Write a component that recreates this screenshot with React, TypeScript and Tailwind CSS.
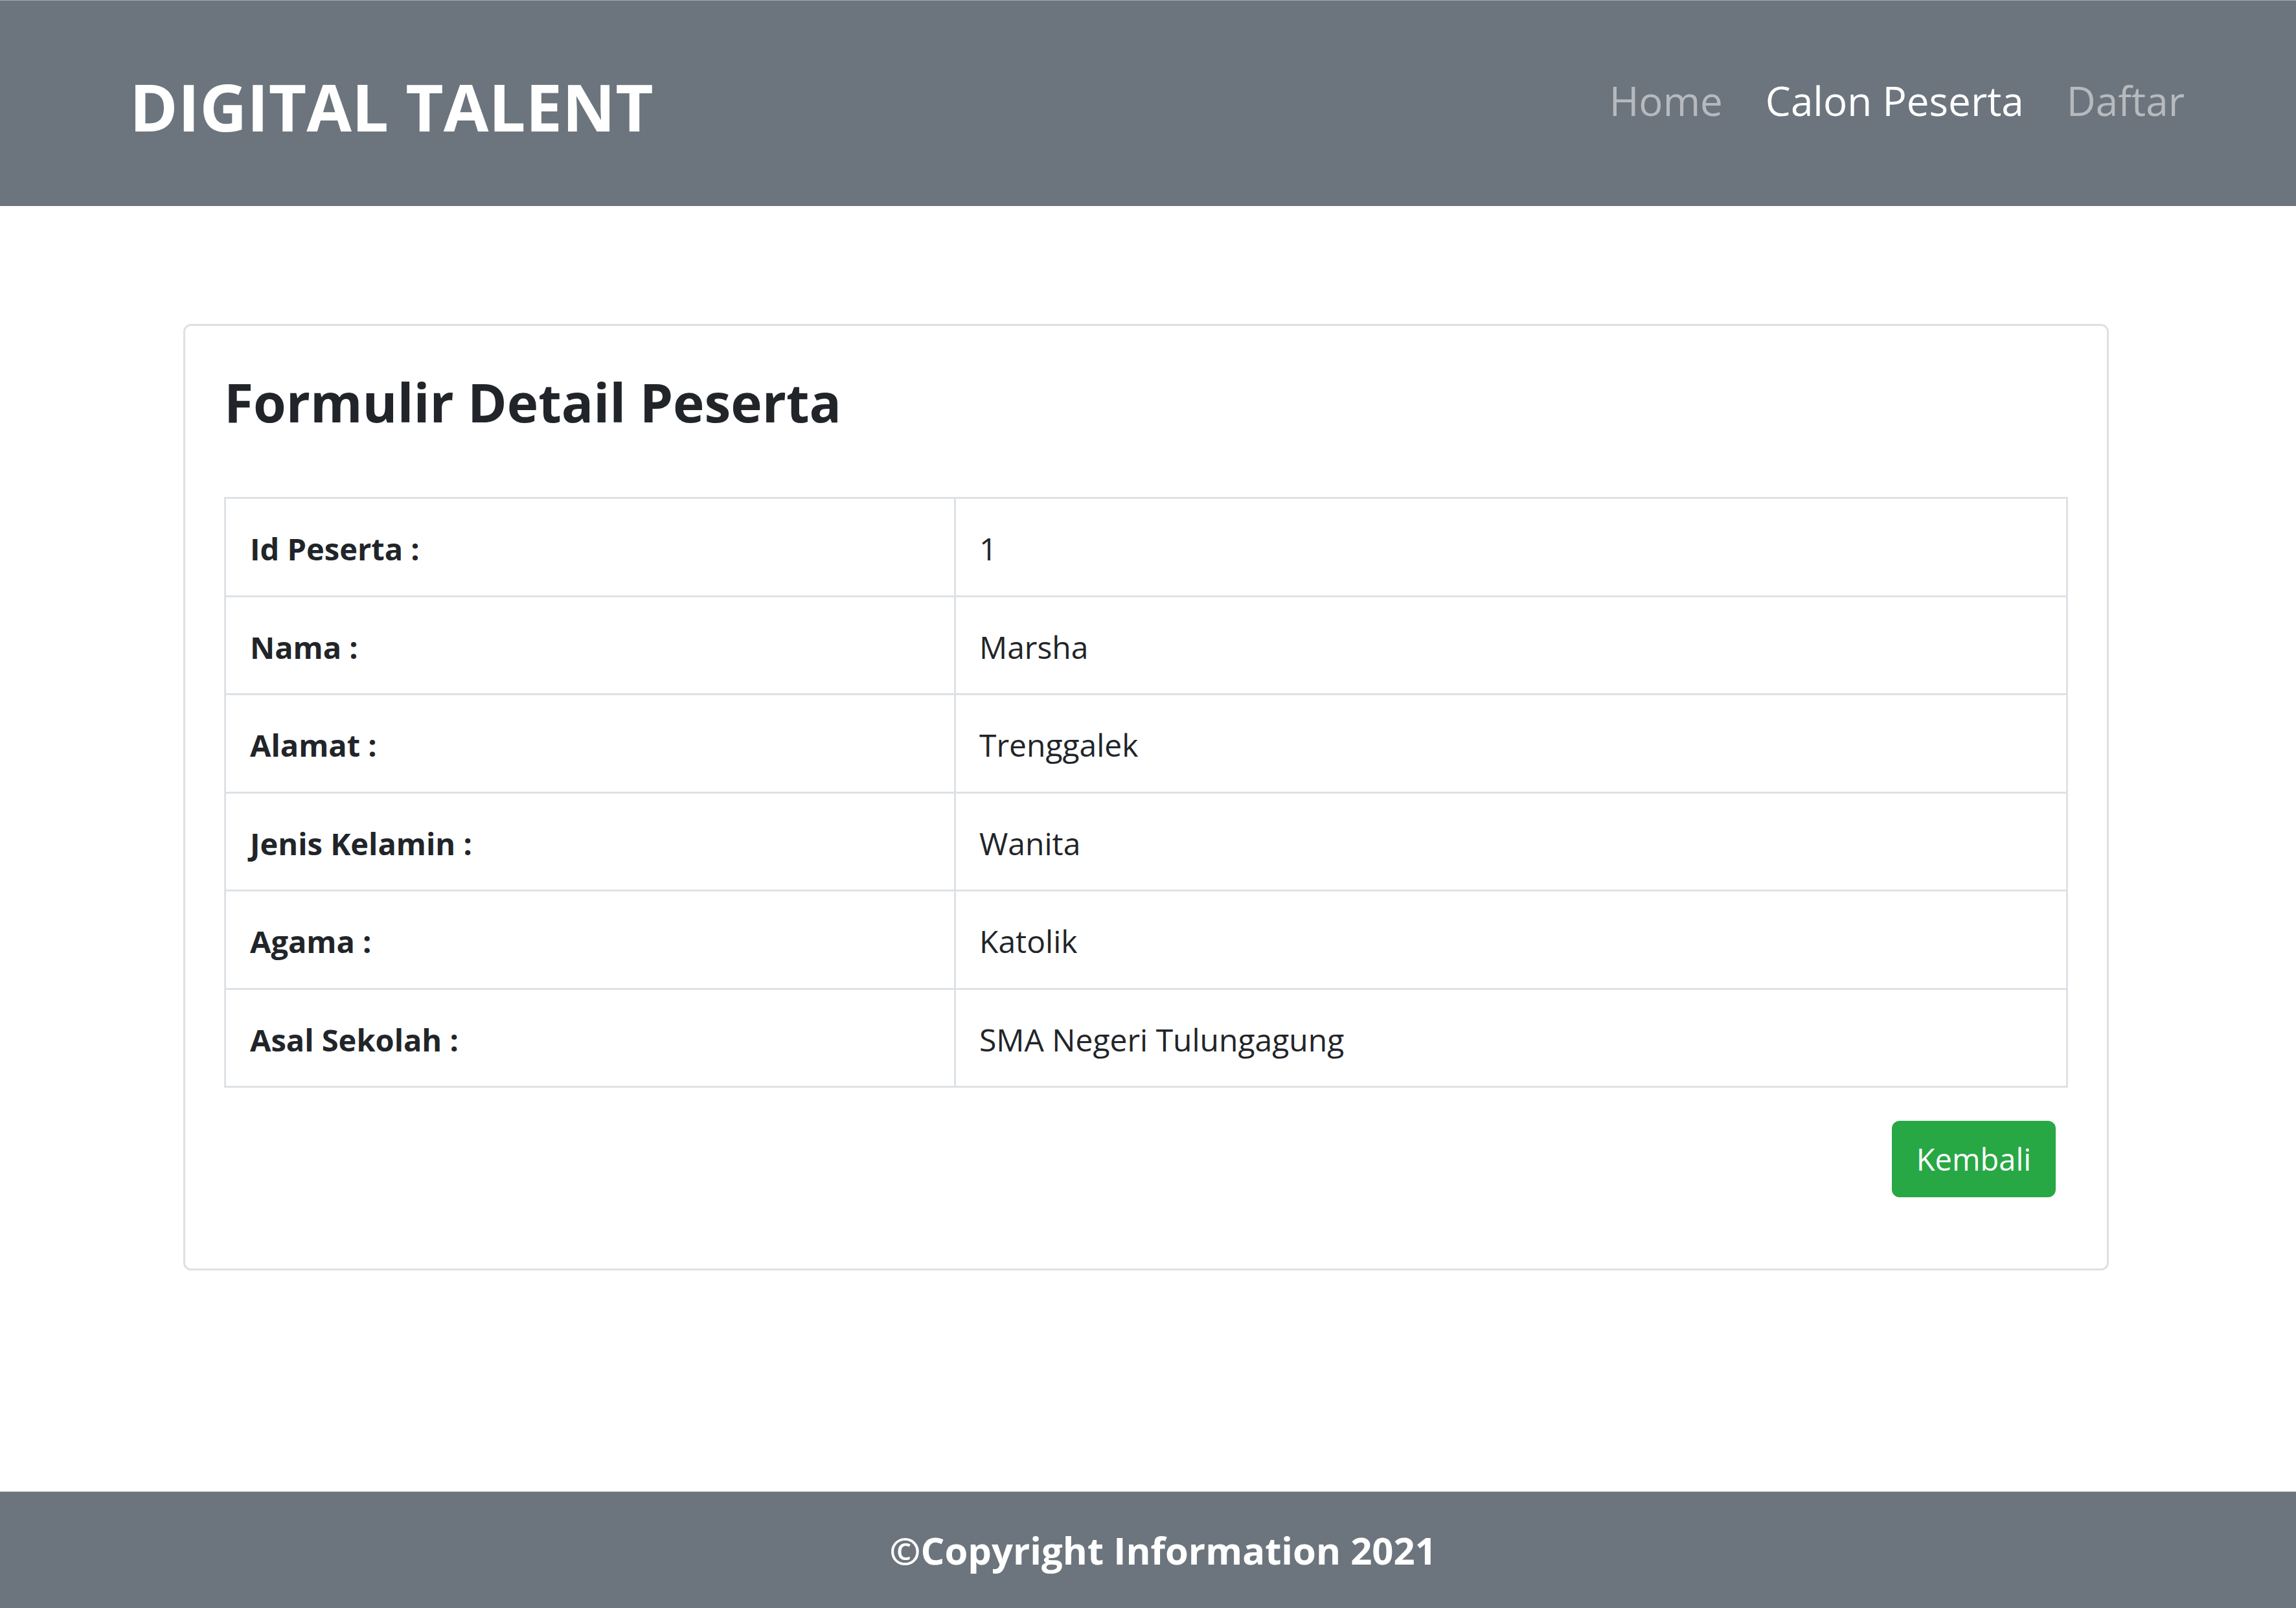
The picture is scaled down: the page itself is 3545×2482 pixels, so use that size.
import React from 'react';

interface Field {
  label: string;
  value: string;
}

const fields: Field[] = [
  { label: 'Id Peserta :', value: '1' },
  { label: 'Nama :', value: 'Marsha' },
  { label: 'Alamat :', value: 'Trenggalek' },
  { label: 'Jenis Kelamin :', value: 'Wanita' },
  { label: 'Agama :', value: 'Katolik' },
  { label: 'Asal Sekolah :', value: 'SMA Negeri Tulungagung' },
];

const navLinks = [
  { label: 'Home', active: false },
  { label: 'Calon Peserta', active: true },
  { label: 'Daftar', active: false },
];

const App: React.FC = () => {
  return (
    <div className="min-h-[2482px] flex flex-col bg-white text-[#212529] font-['Open_Sans',sans-serif]">
      <nav className="h-[318px] shrink-0 bg-[#6c757d] border-t border-[#a3a8ad] flex items-center justify-between pl-[200px] pr-[172px]">
        <a href="#" className="mt-[10px] text-[101px] leading-none font-bold text-white">
          DIGITAL TALENT
        </a>
        <ul className="mb-[9px] flex items-center gap-[66px] text-[62px] leading-none">
          {navLinks.map((link) => (
            <li key={link.label}>
              <a href="#" className={link.active ? 'text-white' : 'text-white/50'}>
                {link.label}
              </a>
            </li>
          ))}
        </ul>
      </nav>

      <main className="flex-1 pt-[182px]">
        <div className="ml-[283px] mr-[289px] border-[3px] border-[#e0e0e0] rounded-[12px] px-[60px] pt-[76px] pb-[110px]">
          <h2 className="text-[82px] leading-none font-bold mb-[106px]">Formulir Detail Peserta</h2>

          <table className="w-full border-collapse">
            <tbody>
              {fields.map((f) => (
                <tr key={f.label} className="h-[151.5px]">
                  <td className="w-[1127px] border-[3px] border-[#dee2e6] pl-[37px] pt-[6px] text-[47px] font-bold">
                    {f.label}
                  </td>
                  <td className="border-[3px] border-[#dee2e6] pl-[36px] pt-[6px] text-[48px]">{f.value}</td>
                </tr>
              ))}
            </tbody>
          </table>

          <div className="flex justify-end mt-[51px] mr-[19px]">
            <button className="w-[253px] h-[118px] rounded-[12px] bg-[#28a745] text-white text-[47px] leading-none">
              Kembali
            </button>
          </div>
        </div>
      </main>

      <footer className="h-[180px] shrink-0 bg-[#6c757d] border-t border-[#a3a8ad] flex items-center justify-center pl-[46px]">
        <p className="text-[58px] leading-none font-bold text-white">©Copyright Information 2021</p>
      </footer>
    </div>
  );
};

export default App;
